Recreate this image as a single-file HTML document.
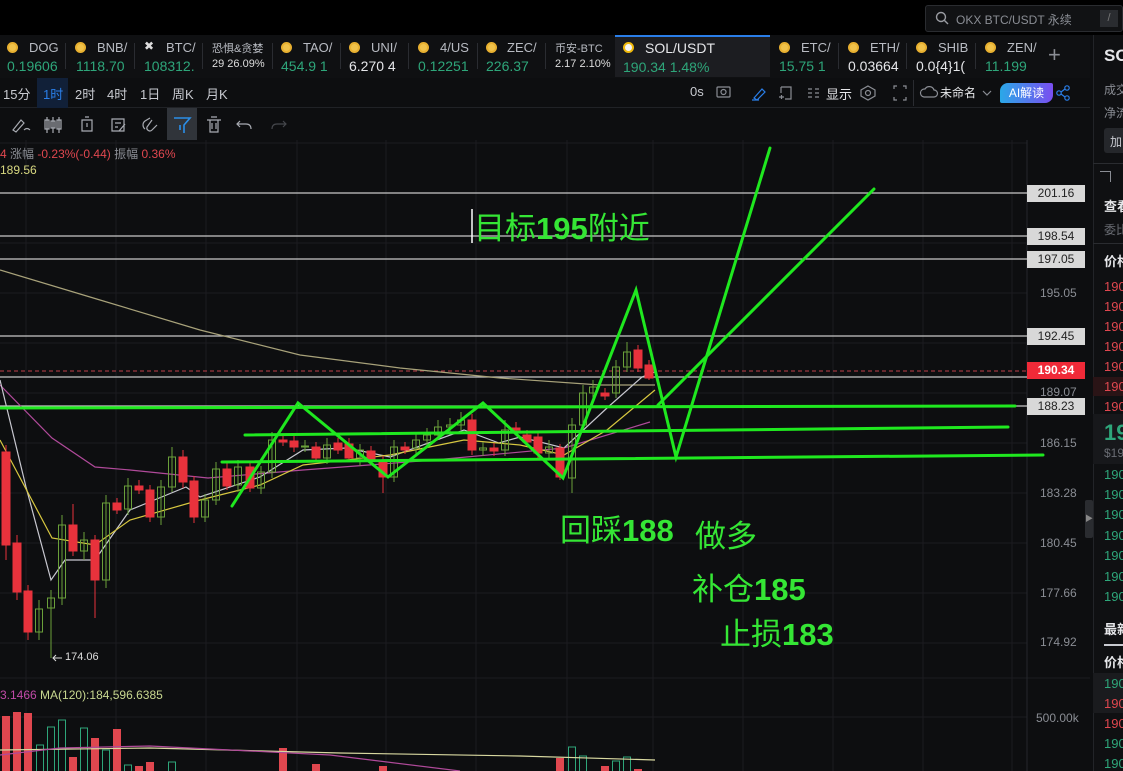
<!DOCTYPE html>
<html><head><meta charset="utf-8"><style>
*{margin:0;padding:0;box-sizing:border-box}
body{width:1123px;height:771px;overflow:hidden;background:#0d0e10;font-family:"Liberation Sans","Noto Sans CJK SC",sans-serif;color:#c8cad0;position:relative}
.a{position:absolute;white-space:nowrap}
.g{color:#2ea67a}.r{color:#e0474f}.w{color:#e6e7ea}
.nm{font-size:13px;color:#b8bbc2}
.pr{font-size:14px}
.ic{position:absolute;width:11px;height:11px;border-radius:50%;background:#f0c24a;border:2px solid #e8b030}
.sep{position:absolute;width:1px;height:26px;background:#2a2c31;top:43px}
.ax{position:absolute;left:1040px;font-size:12px;color:#8a8d94}
.lb{position:absolute;left:1027px;width:58px;height:17px;background:#d8d8d8;color:#222;font-size:12px;text-align:center;line-height:17px}
.ob{position:absolute;left:1104px;font-size:13px;white-space:nowrap}
.gt{position:absolute;color:#35e635;font-size:31px;white-space:nowrap;line-height:1}
</style></head><body>
<div class="a" style="left:0;top:0;width:1123px;height:35px;background:#000"></div>
<div class="a" style="left:925px;top:5px;width:198px;height:27px;background:#111214;border:1px solid #2a2c30;border-radius:3px"></div>
<svg class="a" style="left:935px;top:11px" width="14" height="14"><circle cx="6" cy="6" r="4.5" fill="none" stroke="#9a9ca2" stroke-width="1.4"/><line x1="9.5" y1="9.5" x2="13" y2="13" stroke="#9a9ca2" stroke-width="1.4"/></svg>
<div class="a" style="left:956px;top:11px;font-size:12px;color:#8a8d94">OKX BTC/USDT 永续</div>
<div class="a" style="left:1100px;top:10px;width:18px;height:17px;background:#2a2c30;color:#777;font-size:11px;text-align:center;line-height:17px">/</div>

<div class="a" style="left:0;top:35px;width:1090px;height:43px;background:#0f1012"></div>
<div class="a" style="left:615px;top:35px;width:155px;height:42px;background:#1c1d21;border-top:2px solid #2a7ee8"></div>
<div class="ic" style="left:7px;top:42px"></div><div class="a nm" style="left:29px;top:40px">DOG</div><div class="a pr g" style="left:7px;top:58px">0.19606</div>
<div class="sep" style="left:65px"></div>
<div class="ic" style="left:75px;top:42px"></div><div class="a nm" style="left:97px;top:40px">BNB/</div><div class="a pr g" style="left:76px;top:58px">1118.70</div>
<div class="sep" style="left:134px"></div>
<div class="a" style="left:144px;top:39px;font-size:12px;color:#ddd">✖</div><div class="a nm" style="left:166px;top:40px">BTC/</div><div class="a pr g" style="left:144px;top:58px">108312.</div>
<div class="sep" style="left:202px"></div>
<div class="a" style="left:212px;top:40px;font-size:11px;color:#b8bbc2">恐惧&amp;贪婪</div><div class="a" style="left:212px;top:58px;font-size:11px;color:#ddd">29 26.09%</div>
<div class="sep" style="left:272px"></div>
<div class="ic" style="left:281px;top:42px"></div><div class="a nm" style="left:303px;top:40px">TAO/</div><div class="a pr g" style="left:281px;top:58px">454.9 1</div>
<div class="sep" style="left:340px"></div>
<div class="ic" style="left:349px;top:42px"></div><div class="a nm" style="left:371px;top:40px">UNI/</div><div class="a pr w" style="left:349px;top:58px">6.270 4</div>
<div class="sep" style="left:408px"></div>
<div class="ic" style="left:418px;top:42px"></div><div class="a nm" style="left:440px;top:40px">4/US</div><div class="a pr g" style="left:418px;top:58px">0.12251</div>
<div class="sep" style="left:477px"></div>
<div class="ic" style="left:486px;top:42px"></div><div class="a nm" style="left:507px;top:40px">ZEC/</div><div class="a pr g" style="left:486px;top:58px">226.37</div>
<div class="sep" style="left:545px"></div>
<div class="a" style="left:555px;top:40px;font-size:11px;color:#b8bbc2">币安-BTC</div><div class="a" style="left:555px;top:58px;font-size:11px;color:#ddd">2.17 2.10%</div>
<div class="ic" style="left:623px;top:42px;background:#f5f5f5;border-color:#f0b90b"></div><div class="a" style="left:645px;top:40px;font-size:14px;color:#e6e7ea">SOL/USDT</div><div class="a pr g" style="left:623px;top:59px">190.34 1.48%</div>
<div class="ic" style="left:779px;top:42px"></div><div class="a nm" style="left:801px;top:40px">ETC/</div><div class="a pr g" style="left:779px;top:58px">15.75 1</div>
<div class="sep" style="left:838px"></div>
<div class="ic" style="left:848px;top:42px"></div><div class="a nm" style="left:870px;top:40px">ETH/</div><div class="a pr w" style="left:848px;top:58px">0.03664</div>
<div class="sep" style="left:906px"></div>
<div class="ic" style="left:916px;top:42px"></div><div class="a nm" style="left:938px;top:40px">SHIB</div><div class="a pr w" style="left:916px;top:58px">0.0{4}1(</div>
<div class="sep" style="left:975px"></div>
<div class="ic" style="left:985px;top:42px"></div><div class="a nm" style="left:1007px;top:40px">ZEN/</div><div class="a pr g" style="left:985px;top:58px">11.199</div>
<div class="a" style="left:1048px;top:42px;font-size:22px;color:#8a8d94">+</div>

<div class="a" style="left:0;top:78px;width:1090px;height:30px;background:#0d0e10;border-bottom:1px solid #202226"></div>
<div class="a" style="left:37px;top:78px;width:31px;height:30px;background:#112038"></div>
<div class="a" style="left:3px;top:84px;font-size:13px;color:#c8cad0">15分</div>
<div class="a" style="left:43px;top:84px;font-size:13px;color:#2a7ee8">1时</div>
<div class="a" style="left:75px;top:84px;font-size:13px">2时</div>
<div class="a" style="left:107px;top:84px;font-size:13px">4时</div>
<div class="a" style="left:140px;top:84px;font-size:13px">1日</div>
<div class="a" style="left:172px;top:84px;font-size:13px">周K</div>
<div class="a" style="left:206px;top:84px;font-size:13px">月K</div>
<div class="a" style="left:690px;top:84px;font-size:13px">0s</div>
<svg class="a" style="left:715px;top:84px" width="360" height="18" fill="none" stroke="#8a8d94" stroke-width="1.2">
<rect x="2" y="3" width="13" height="10" rx="1"/><circle cx="8.5" cy="8" r="2.5"/>
<path d="M39 14 L47 5 L50 8 L42 16 Z M37 16 H44" stroke="#2a7ee8"/>
<path d="M66 3 H76 V15 H70 M66 3 V9 M64 13 H69 M66.5 11 V15"/>
<path d="M93 5 H97 M93 9 H97 M93 13 H97 M100 5 H104 M100 9 H104 M100 13 H104"/>
<path d="M153 2 L160 6 V12 L153 16 L146 12 V6 Z"/><circle cx="153" cy="9" r="2.5"/>
<path d="M182 2 H179 V5 M188 2 H191 V5 M182 16 H179 V13 M188 16 H191 V13"/>
<path d="M209 13 A4 4 0 0 1 210 5 A5 5 0 0 1 219 6 A3.5 3.5 0 0 1 219 13 Z"/>
<path d="M268 7 L272 11 L276 7"/>
<circle cx="344" cy="9" r="2.2" stroke="#2a7ee8"/><circle cx="352" cy="4" r="2.2" stroke="#2a7ee8"/><circle cx="352" cy="14" r="2.2" stroke="#2a7ee8"/><path d="M346 8 L350 5 M346 10 L350 13" stroke="#2a7ee8"/>
</svg>
<div class="a" style="left:826px;top:84px;font-size:13px;color:#e6e7ea">显示</div>
<div class="a" style="left:913px;top:80px;width:1px;height:26px;background:#2a2c31"></div>
<div class="a" style="left:940px;top:84px;font-size:12px;color:#e6e7ea">未命名</div>
<div class="a" style="left:1000px;top:83px;width:53px;height:20px;border-radius:8px 2px 8px 2px;background:linear-gradient(90deg,#2aa8e8,#7a4ef0);color:#fff;font-size:12px;text-align:center;line-height:20px">AI解读</div>

<div class="a" style="left:167px;top:108px;width:30px;height:32px;background:#30343a"></div>
<svg class="a" style="left:0;top:108px" width="300" height="32" fill="none" stroke="#a8abb2" stroke-width="1.2">
<path d="M13 22 L21 12 L24 15 L16 24 Z M24 22 Q27 19 30 22"/>
<path d="M47 9 V25 M53 9 V25 M59 9 V25 M45 12 H49 V21 H45 Z M51 13 H55 V20 H51 Z M57 12 H61 V21 H57 Z"/>
<path d="M82 12 H92 V23 H82 Z M85 9 H89 M87 15 V19"/>
<path d="M112 11 H124 V23 H112 Z M115 15 H121 M115 19 H118 M119 23 L125 16"/>
<path d="M145 21 A5 5 0 0 1 145 13 L150 10 M152 12 L147 19 A3 3 0 0 0 152 22 L157 17"/>
<path d="M174 10 H190 L184 17 V25 M180 17 V22" stroke="#2a8ee8" stroke-width="1.6"/>
<path d="M207 12 H221 M210 12 V24 H218 V12 M211 9 H217 M212 15 V21 M216 15 V21"/>
<path d="M240 13 L237 16 L240 19 M237 16 H246 Q251 16 251 21"/>
<path d="M283 13 L286 16 L283 19 M286 16 H277 Q272 16 272 21" stroke="#45474c"/>
</svg>

<svg class="a" style="left:0;top:0" width="1090" height="771">
<g stroke="#1b1c20" stroke-width="1">
<path d="M0 143 H1027 M0 193 H1027 M0 243 H1027 M0 293 H1027 M0 343 H1027 M0 393 H1027 M0 443 H1027 M0 493 H1027 M0 543 H1027 M0 593 H1027 M0 643 H1027 M0 678 H1090 M0 717 H1027"/>
<path d="M26 140 V771 M116 140 V771 M206 140 V771 M297 140 V771 M386 140 V771 M476 140 V771 M567 140 V771 M653 140 V771 M743 140 V771 M833 140 V771 M923 140 V771 M1012 140 V771"/>
<path d="M1027 140 V771" stroke="#25272b"/>
</g>
<g stroke="#c8c8c8" stroke-width="1.2">
<path d="M0 193 H1027 M0 236 H1027 M0 259 H1027 M0 336 H1027 M0 377 H1027 M0 406 H1027"/>
</g>
<path d="M0 371 H1027" stroke="#c0404a" stroke-width="1" stroke-dasharray="4 3"/>
<g fill="none" stroke-width="1.2">
<path d="M0 270 L100 300 L200 330 L300 355 L400 368 L500 378 L600 385 L655 385" stroke="#a8a27a"/>
<path d="M0 385 L52 438 L95 467 L130 470 L208 478 L303 470 L434 460 L564 448 L650 422" stroke="#b04a9a"/>
<path d="M0 380 L26 487 L51 580 L65 560 L95 560 L130 510 L186 487 L200 497 L260 477 L303 450 L347 448 L390 457 L464 430 L499 443 L520 437 L564 448 L607 408 L642 377 L655 372" stroke="#c8c8d0"/>
<path d="M0 440 L52 538 L95 545 L130 520 L200 500 L260 485 L303 465 L390 455 L464 440 L520 445 L564 455 L607 430 L655 390" stroke="#d8c840"/>
</g>
<g fill="#e8323c" stroke="#e8323c" stroke-width="1">
<path d="M6 445 V560 M17 535 V600 M28 585 V640 M73 504 V556 M95 535 V618 M117 498 V514 M139 480 V494 M150 485 V522 M183 450 V488 M194 476 V523 M227 462 V490 M250 462 V492 M283 434 V446 M294 436 V452 M316 442 V462 M338 438 V454 M349 438 V462 M371 446 V464 M383 456 V493 M405 442 V454 M472 414 V455 M494 443 V456 M516 422 V434 M527 430 V446 M538 432 V458 M560 444 V480 M605 388 V400 M638 345 V372 M649 360 V380"/>
<rect x="2" y="452" width="8" height="93"/><rect x="13" y="543" width="8" height="49"/><rect x="24" y="591" width="8" height="41"/><rect x="69" y="525" width="8" height="26"/><rect x="91" y="540" width="8" height="40"/><rect x="113" y="503" width="8" height="7"/><rect x="135" y="486" width="8" height="4"/><rect x="146" y="490" width="8" height="27"/><rect x="179" y="457" width="8" height="25"/><rect x="190" y="481" width="8" height="36"/><rect x="223" y="469" width="8" height="17"/><rect x="246" y="467" width="8" height="21"/><rect x="279" y="440" width="8" height="2"/><rect x="290" y="441" width="8" height="6"/><rect x="312" y="447" width="8" height="11"/><rect x="334" y="443" width="8" height="7"/><rect x="345" y="444" width="8" height="14"/><rect x="367" y="451" width="8" height="9"/><rect x="379" y="462" width="8" height="15"/><rect x="401" y="447" width="8" height="3"/><rect x="468" y="420" width="8" height="30"/><rect x="490" y="448" width="8" height="3"/><rect x="512" y="428" width="8" height="2"/><rect x="523" y="435" width="8" height="7"/><rect x="534" y="437" width="8" height="16"/><rect x="556" y="448" width="8" height="29"/><rect x="601" y="393" width="8" height="3"/><rect x="634" y="350" width="8" height="18"/><rect x="645" y="365" width="8" height="13"/>
</g>
<g fill="none" stroke="#6aa03a" stroke-width="1">
<path d="M39 600 V640 M51 590 V658 M62 515 V605 M84 532 V560 M106 495 V588 M128 478 V515 M161 480 V525 M172 447 V492 M205 494 V522 M216 462 V505 M238 460 V492 M261 466 V494 M272 432 V478 M305 440 V452 M327 438 V464 M360 444 V466 M394 440 V482 M416 434 V454 M427 428 V446 M438 420 V440 M450 418 V432 M461 412 V430 M483 442 V456 M505 420 V456 M549 440 V460 M572 418 V493 M583 385 V430 M593 380 V398 M616 360 V398 M627 342 V372"/>
<rect x="35.5" y="609" width="7" height="23"/><rect x="47.5" y="598" width="7" height="10"/><rect x="58.5" y="525" width="7" height="73"/><rect x="80.5" y="540" width="7" height="11"/><rect x="102.5" y="503" width="7" height="77"/><rect x="124.5" y="486" width="7" height="23"/><rect x="157.5" y="487" width="7" height="30"/><rect x="168.5" y="457" width="7" height="30"/><rect x="201.5" y="500" width="7" height="17"/><rect x="212.5" y="469" width="7" height="31"/><rect x="234.5" y="467" width="7" height="18"/><rect x="257.5" y="472" width="7" height="16"/><rect x="268.5" y="440" width="7" height="32"/><rect x="301.5" y="446" width="7" height="1"/><rect x="323.5" y="445" width="7" height="13"/><rect x="356.5" y="450" width="7" height="8"/><rect x="390.5" y="447" width="7" height="30"/><rect x="412.5" y="440" width="7" height="8"/><rect x="423.5" y="435" width="7" height="5"/><rect x="434.5" y="427" width="7" height="8"/><rect x="446.5" y="425" width="7" height="2"/><rect x="457.5" y="420" width="7" height="5"/><rect x="479.5" y="448" width="7" height="2"/><rect x="501.5" y="430" width="7" height="20"/><rect x="545.5" y="447" width="7" height="6"/><rect x="568.5" y="425" width="7" height="53"/><rect x="579.5" y="393" width="7" height="32"/><rect x="589.5" y="387" width="7" height="6"/><rect x="612.5" y="367" width="7" height="26"/><rect x="623.5" y="352" width="7" height="15"/>
</g>
<g fill="#e0474f">
<rect x="2" y="716" width="8" height="55"/><rect x="13" y="712" width="8" height="59"/><rect x="24" y="713" width="8" height="58"/><rect x="69" y="757" width="8" height="14"/><rect x="91" y="738" width="8" height="33"/><rect x="113" y="729" width="8" height="42"/><rect x="135" y="766" width="8" height="5"/><rect x="146" y="762" width="8" height="9"/><rect x="279" y="748" width="8" height="23"/><rect x="312" y="764" width="8" height="7"/><rect x="379" y="766" width="8" height="5"/><rect x="556" y="758" width="8" height="13"/><rect x="601" y="766" width="8" height="5"/><rect x="634" y="769" width="8" height="2"/>
</g>
<g fill="none" stroke="#2ea67a">
<rect x="36.5" y="745" width="7" height="30"/><rect x="47.5" y="727" width="7" height="50"/><rect x="58.5" y="720" width="7" height="60"/><rect x="80.5" y="728" width="7" height="50"/><rect x="102.5" y="750" width="7" height="30"/><rect x="124.5" y="765" width="7" height="10"/><rect x="168.5" y="762" width="7" height="10"/><rect x="568.5" y="747" width="7" height="30"/><rect x="579.5" y="756" width="7" height="20"/><rect x="612.5" y="761" width="7" height="15"/><rect x="623.5" y="757" width="7" height="20"/>
</g>
<path d="M0 750 L150 748 L340 753 L520 756 L655 760" fill="none" stroke="#d8d8a0" stroke-width="1.2"/>
<path d="M0 755 L60 748 L150 746 L330 755 L460 771" fill="none" stroke="#b04a9a" stroke-width="1.2"/>
<g stroke="#1fe81f" stroke-width="3" fill="none" stroke-linecap="round">
<path d="M0 408 L1015 406"/>
<path d="M245 435 L1008 427"/>
<path d="M222 462 L1043 455"/>
<path d="M232 506 L298 403 L388 477 L483 403 L563 478 L636 290 L676 457 L770 148"/>
<path d="M658 405 L874 189"/>
</g>
<path d="M472 209 V243" stroke="#fff" stroke-width="1.5"/>
<path d="M53 658 H62 M56 655 L53 658 L56 661" stroke="#ddd" fill="none"/>
</svg>
<div class="a" style="left:65px;top:651px;font-size:11px;color:#ddd">174.06</div>

<div class="a" style="left:0;top:145px;font-size:12px"><span class="r">4</span> <span style="color:#8a8d94">涨幅</span> <span class="r">-0.23%(-0.44)</span> <span style="color:#8a8d94">振幅</span> <span class="r">0.36%</span></div>
<div class="a" style="left:0;top:163px;font-size:12px;color:#d8d880">189.56</div>
<div class="a" style="left:0;top:688px;font-size:12px"><span style="color:#c04aa8">3.1466</span> <span style="color:#c8d890">MA(120):184,596.6385</span></div>

<div class="gt" style="left:474px;top:213px">目标<b>195</b>附近</div>
<div class="gt" style="left:560px;top:515px">回踩<b>188</b></div>
<div class="gt" style="left:695px;top:521px">做多</div>
<div class="gt" style="left:692px;top:574px">补仓<b>185</b></div>
<div class="gt" style="left:720px;top:619px">止损<b>183</b></div>

<div class="lb" style="top:185px">201.16</div>
<div class="lb" style="top:228px">198.54</div>
<div class="lb" style="top:251px">197.05</div>
<div class="ax" style="top:286px">195.05</div>
<div class="lb" style="top:328px">192.45</div>
<div class="lb" style="top:362px;background:#f02a38;color:#fff;font-weight:bold">190.34</div>
<div class="ax" style="top:385px">189.07</div>
<div class="lb" style="top:398px">188.23</div>
<div class="ax" style="top:436px">186.15</div>
<div class="ax" style="top:486px">183.28</div>
<div class="ax" style="top:536px">180.45</div>
<div class="ax" style="top:586px">177.66</div>
<div class="ax" style="top:635px">174.92</div>
<div class="ax" style="left:1036px;top:711px">500.00k</div>
<div class="a" style="left:1085px;top:500px;width:8px;height:38px;background:#2a2c30;border-radius:2px;color:#888;font-size:8px;line-height:38px;text-align:center">▶</div>

<div class="a" style="left:1093px;top:35px;width:30px;height:736px;background:#0f1012;border-left:1px solid #222428;overflow:hidden"></div>
<div class="ob" style="top:46px;font-size:17px;font-weight:bold;color:#e6e7ea">SO</div>
<div class="ob" style="top:81px;font-size:12px;color:#8a8d94">成交</div>
<div class="ob" style="top:104px;font-size:12px;color:#8a8d94">净流</div>
<div class="a" style="left:1104px;top:128px;width:25px;height:25px;background:#25272b;border-radius:3px;color:#c8cad0;font-size:12px;padding:5px 0 0 6px">加</div>
<div class="a" style="left:1093px;top:163px;width:30px;height:1px;background:#2a2c30"></div>
<div class="a" style="left:1100px;top:171px;width:11px;height:11px;border:1px solid #8a8d94;border-width:1px 1px 0 0"></div>
<div class="ob" style="top:196px;font-weight:bold;color:#e6e7ea">查看</div>
<div class="ob" style="top:221px;font-size:12px;color:#6a6d74">委比</div>
<div class="a" style="left:1093px;top:243px;width:30px;height:1px;background:#2a2c30"></div>
<div class="ob" style="top:251px;font-weight:bold;color:#e6e7ea">价格</div>
<div class="a" style="left:1093px;top:377px;width:30px;height:19px;background:#2a1416"></div>
<div class="ob r" style="top:279px">190</div><div class="ob r" style="top:299px">190</div><div class="ob r" style="top:319px">190</div><div class="ob r" style="top:339px">190</div><div class="ob r" style="top:359px">190</div><div class="ob r" style="top:379px">190</div><div class="ob r" style="top:399px">190</div>
<div class="a" style="left:1093px;top:414px;width:30px;height:50px;background:#17181b"></div>
<div class="ob g" style="top:420px;font-size:22px;font-weight:bold">19</div>
<div class="ob" style="top:446px;font-size:12px;color:#6a6d74">$19</div>
<div class="ob g" style="top:467px">190</div><div class="ob g" style="top:487px">190</div><div class="ob g" style="top:507px">190</div><div class="ob g" style="top:528px">190</div><div class="ob g" style="top:548px">190</div><div class="ob g" style="top:569px">190</div><div class="ob g" style="top:589px">190</div>
<div class="ob" style="top:619px;font-weight:bold;color:#e6e7ea">最新</div>
<div class="a" style="left:1104px;top:644px;width:19px;height:2px;background:#c8cad0"></div>
<div class="ob" style="top:652px;font-weight:bold;color:#e6e7ea">价格</div>
<div class="a" style="left:1093px;top:673px;width:30px;height:40px;background:#1a1b1e"></div>
<div class="ob g" style="top:676px">190</div><div class="ob r" style="top:696px">190</div><div class="ob r" style="top:716px">190</div><div class="ob g" style="top:736px">190</div><div class="ob g" style="top:756px">190</div>
</body></html>
